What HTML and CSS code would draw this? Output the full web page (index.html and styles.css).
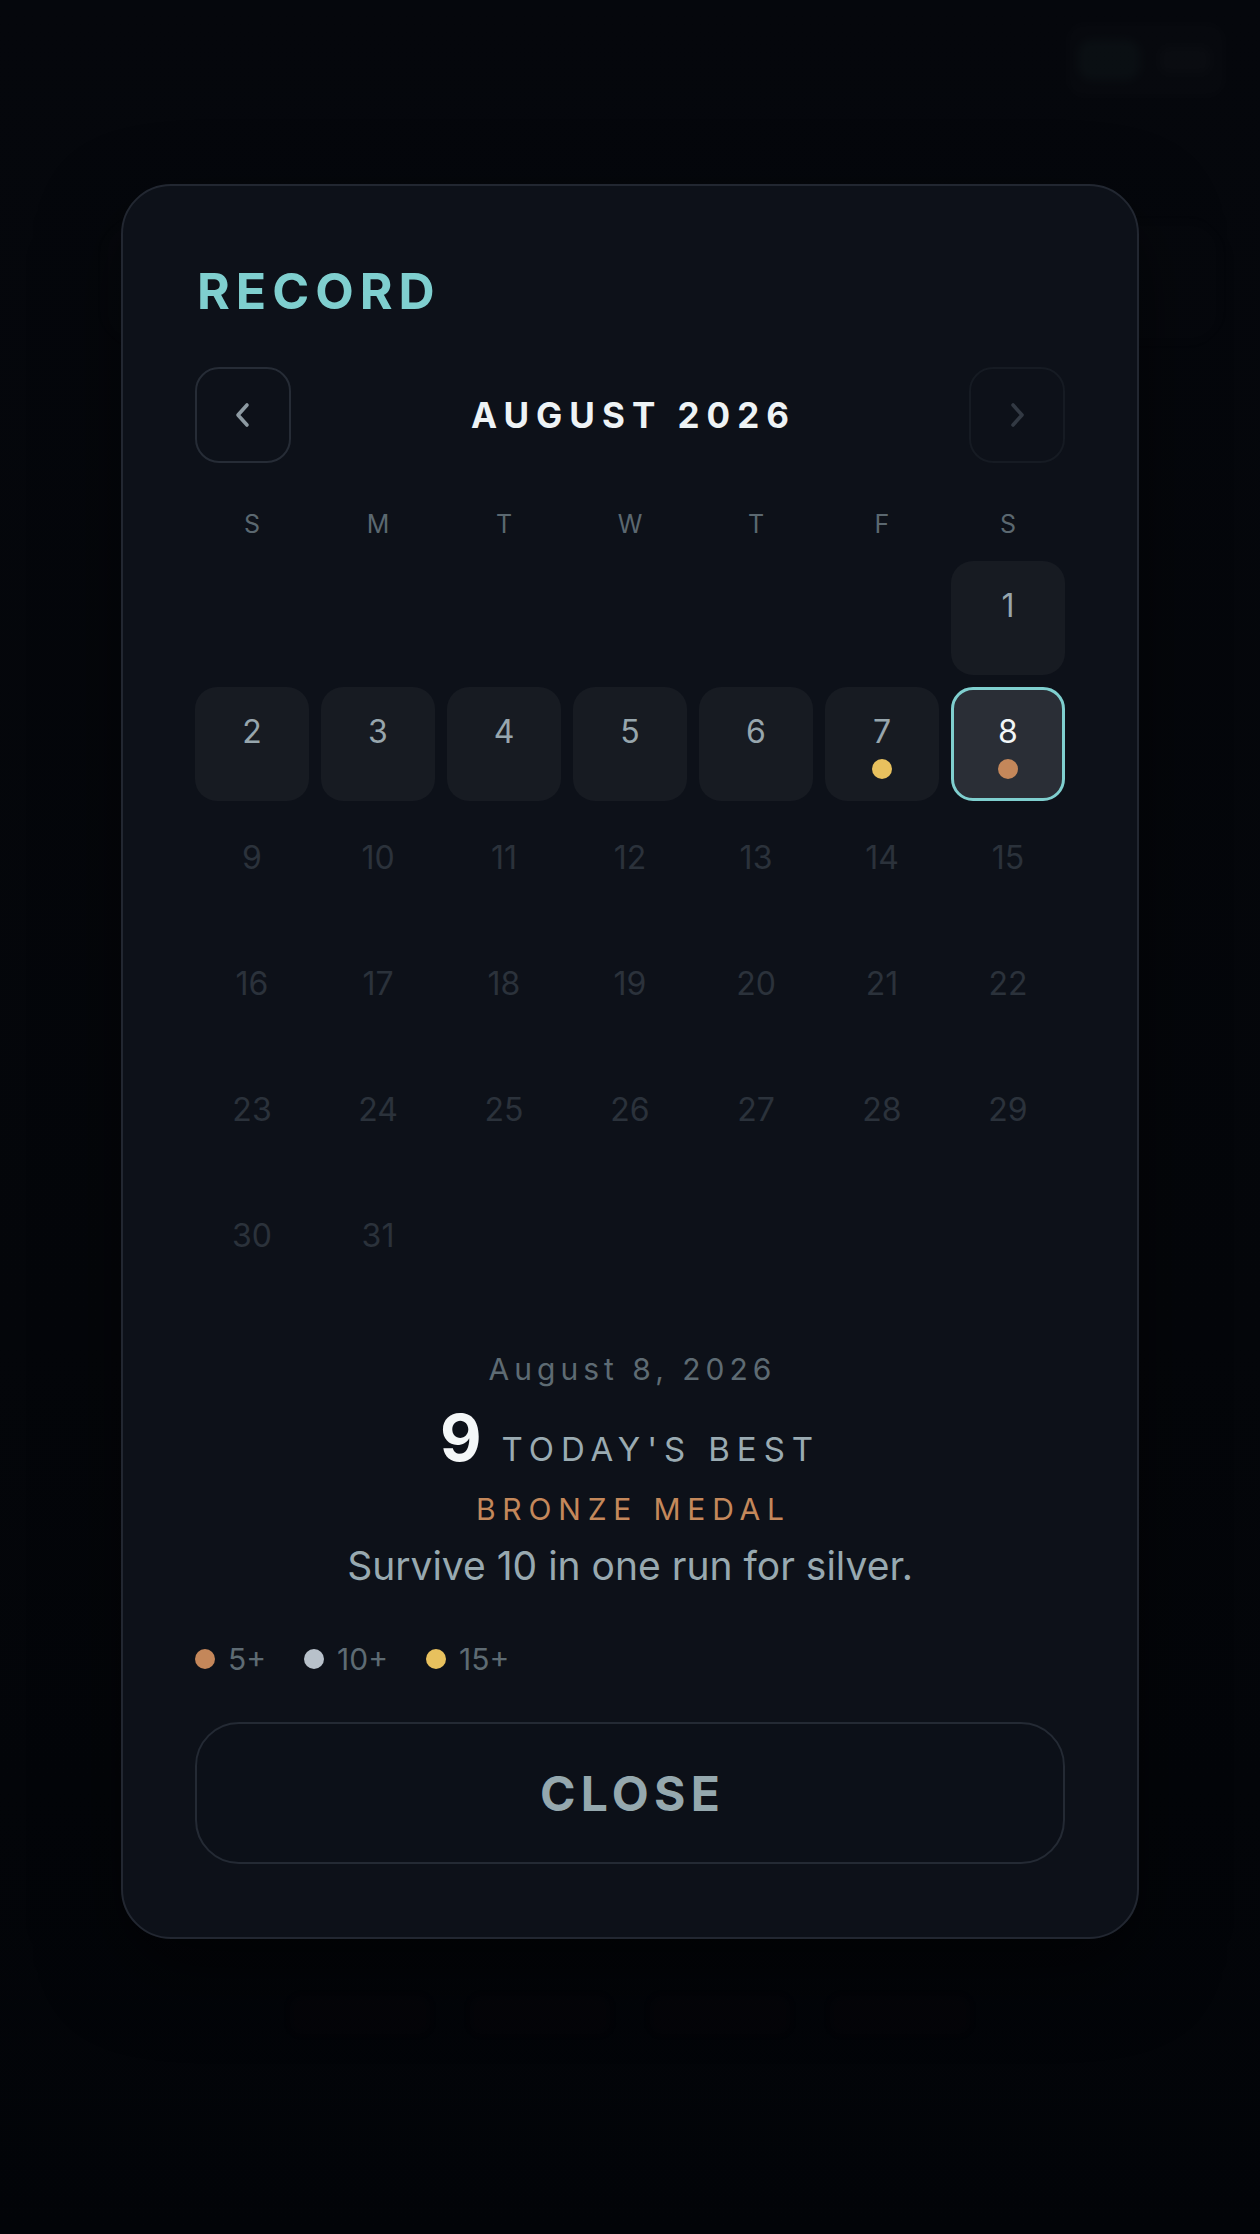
FILE: index.html
```html
<!DOCTYPE html>
<html>
  <head>
    <meta charset="utf-8">
    <title>Record</title>
    <link rel="stylesheet" href="styles.css">
  </head>
  <body>
    <!-- the game screen behind the dialog -->
    <div class="scene">
      <div class="scene-top">
        <div class="ghost-pill"><span class="ghost-dot"></span><span class="ghost-label"></span></div>
      </div>
      <div class="scene-banner"></div>
      <div class="scene-actions">
        <span class="ghost-btn"></span>
        <span class="ghost-btn"></span>
        <span class="ghost-btn"></span>
        <span class="ghost-btn"></span>
      </div>
    </div>

    <!-- record dialog -->
    <div class="overlay">
      <section class="modal">
        <h1 class="modal-title">RECORD</h1>

        <div class="month-nav">
          <button class="nav-btn" aria-label="Previous month">
            <svg width="20" height="26" viewBox="0 0 20 26"><path d="M14 3 L5 13 L14 23" fill="none" stroke="currentColor" stroke-width="3.6" stroke-linecap="round" stroke-linejoin="round"/></svg>
          </button>
          <div class="month-label">AUGUST 2026</div>
          <button class="nav-btn is-disabled" aria-label="Next month">
            <svg width="20" height="26" viewBox="0 0 20 26"><path d="M6 3 L15 13 L6 23" fill="none" stroke="currentColor" stroke-width="3.6" stroke-linecap="round" stroke-linejoin="round"/></svg>
          </button>
        </div>

        <div class="weekdays">
          <span>S</span><span>M</span><span>T</span><span>W</span><span>T</span><span>F</span><span>S</span>
        </div>

        <div class="days">
          <div class="day empty"></div>
          <div class="day empty"></div>
          <div class="day empty"></div>
          <div class="day empty"></div>
          <div class="day empty"></div>
          <div class="day empty"></div>
          <div class="day past"><span class="num">1</span><span class="dot"></span></div>

          <div class="day past"><span class="num">2</span><span class="dot"></span></div>
          <div class="day past"><span class="num">3</span><span class="dot"></span></div>
          <div class="day past"><span class="num">4</span><span class="dot"></span></div>
          <div class="day past"><span class="num">5</span><span class="dot"></span></div>
          <div class="day past"><span class="num">6</span><span class="dot"></span></div>
          <div class="day past"><span class="num">7</span><span class="dot gold"></span></div>
          <div class="day selected"><span class="num">8</span><span class="dot bronze"></span></div>

          <div class="day future"><span class="num">9</span><span class="dot"></span></div>
          <div class="day future"><span class="num">10</span><span class="dot"></span></div>
          <div class="day future"><span class="num">11</span><span class="dot"></span></div>
          <div class="day future"><span class="num">12</span><span class="dot"></span></div>
          <div class="day future"><span class="num">13</span><span class="dot"></span></div>
          <div class="day future"><span class="num">14</span><span class="dot"></span></div>
          <div class="day future"><span class="num">15</span><span class="dot"></span></div>

          <div class="day future"><span class="num">16</span><span class="dot"></span></div>
          <div class="day future"><span class="num">17</span><span class="dot"></span></div>
          <div class="day future"><span class="num">18</span><span class="dot"></span></div>
          <div class="day future"><span class="num">19</span><span class="dot"></span></div>
          <div class="day future"><span class="num">20</span><span class="dot"></span></div>
          <div class="day future"><span class="num">21</span><span class="dot"></span></div>
          <div class="day future"><span class="num">22</span><span class="dot"></span></div>

          <div class="day future"><span class="num">23</span><span class="dot"></span></div>
          <div class="day future"><span class="num">24</span><span class="dot"></span></div>
          <div class="day future"><span class="num">25</span><span class="dot"></span></div>
          <div class="day future"><span class="num">26</span><span class="dot"></span></div>
          <div class="day future"><span class="num">27</span><span class="dot"></span></div>
          <div class="day future"><span class="num">28</span><span class="dot"></span></div>
          <div class="day future"><span class="num">29</span><span class="dot"></span></div>

          <div class="day future"><span class="num">30</span><span class="dot"></span></div>
          <div class="day future"><span class="num">31</span><span class="dot"></span></div>
        </div>

        <div class="summary">
          <div class="summary-date">August 8, 2026</div>
          <div class="summary-best">
            <span class="best-value">9</span>
            <span class="best-label">TODAY'S BEST</span>
          </div>
          <div class="summary-medal">BRONZE MEDAL</div>
          <div class="summary-hint">Survive 10 in one run for silver.</div>
        </div>

        <div class="legend">
          <span class="legend-item"><span class="dot bronze"></span>5+</span>
          <span class="legend-item"><span class="dot silver"></span>10+</span>
          <span class="legend-item"><span class="dot gold"></span>15+</span>
        </div>

        <button class="close-btn">CLOSE</button>
      </section>
    </div>
  </body>
</html>
```

FILE: styles.css
```css
html,
body {
  margin: 0;
  height: 2234px;
}

body {
  position: relative;
  background: linear-gradient(180deg, #05070c 0%, #04060a 60%, #020408 100%);
  font-family: Inter, "Noto Sans", sans-serif;
  overflow: hidden;
}

/* faded game screen behind the dialog */
.scene {
  display: flex;
  flex-direction: column;
  height: 100%;
  filter: blur(4px);
}

.scene-top {
  display: flex;
  justify-content: flex-end;
  padding: 22px 34px 0 0;
}

.ghost-pill {
  display: flex;
  align-items: center;
  gap: 20px;
  width: 160px;
  height: 76px;
  padding: 0 12px;
  box-sizing: border-box;
  border-radius: 18px;
  background: rgba(255, 255, 255, 0.01);
}

.ghost-dot {
  width: 62px;
  height: 40px;
  border-radius: 14px;
  background: rgba(110, 190, 170, 0.035);
}

.ghost-label {
  width: 50px;
  height: 26px;
  border-radius: 8px;
  background: rgba(255, 255, 255, 0.015);
}

.scene-banner {
  height: 120px;
  margin: 124px 40px 0 104px;
  border-radius: 30px;
  background: rgba(150, 170, 200, 0.012);
  filter: blur(6px);
}

.scene-actions {
  display: flex;
  justify-content: center;
  gap: 40px;
  margin-top: auto;
  margin-bottom: 200px;
}

.ghost-btn {
  width: 140px;
  height: 38px;
  border-radius: 10px;
  background: rgba(90, 40, 40, 0.03);
}

/* dialog */
.overlay {
  position: absolute;
  inset: 0;
  display: flex;
  justify-content: center;
  align-items: flex-start;
  padding-top: 184px;
}

.modal {
  width: 1018px;
  box-sizing: border-box;
  padding: 74px 72px 73px;
  background: rgba(14, 18, 26, 0.96);
  border: 2px solid #222731;
  border-radius: 50px;
  box-shadow: 0 30px 80px rgba(0, 0, 0, 0.5);
}

.modal-title {
  margin: 0;
  font-size: 50px;
  line-height: 62px;
  font-weight: 700;
  letter-spacing: 0.12em;
  color: #7fcfcf;
  padding-left: 2px;
}

.month-nav {
  display: grid;
  grid-template-columns: 96px 1fr 96px;
  align-items: center;
  margin-top: 45px;
}

.nav-btn {
  width: 96px;
  height: 96px;
  display: flex;
  align-items: center;
  justify-content: center;
  padding: 0;
  background: transparent;
  border: 2px solid #262c36;
  border-radius: 24px;
  color: #8d9aa2;
  cursor: pointer;
}

.nav-btn.is-disabled {
  border-color: #161b23;
  color: #323943;
}

.month-label {
  text-align: center;
  font-size: 35px;
  line-height: 44px;
  font-weight: 700;
  letter-spacing: 0.2em;
  text-indent: 0.2em;
  color: #eef3f5;
}

.weekdays {
  display: grid;
  grid-template-columns: repeat(7, 114px);
  column-gap: 12px;
  margin-top: 46px;
  font-size: 25px;
  line-height: 30px;
  color: #5b6870;
  text-align: center;
}

.days {
  display: grid;
  grid-template-columns: repeat(7, 114px);
  grid-auto-rows: 114px;
  gap: 12px;
  margin-top: 22px;
}

.day {
  display: flex;
  flex-direction: column;
  align-items: center;
  box-sizing: border-box;
  padding-top: 25px;
  border-radius: 22px;
}

.day .num {
  font-size: 32px;
  line-height: 40px;
}

.day .dot {
  margin-top: 7px;
}

.day.past {
  background: #171b22;
  color: #97a6ad;
}

.day.selected {
  background: #2a2e36;
  border: 3px solid #7fcfcf;
  padding-top: 22px;
  color: #f2f6f7;
}

.day.future {
  color: #2b323b;
}

.dot {
  display: inline-block;
  width: 20px;
  height: 20px;
  border-radius: 50%;
}

.dot.bronze {
  background: #c4875a;
}

.dot.silver {
  background: #b8c1ca;
}

.dot.gold {
  background: #e8c15e;
}

.summary {
  display: flex;
  flex-direction: column;
  align-items: center;
  margin-top: 44px;
  text-align: center;
}

.summary-date {
  font-size: 30px;
  line-height: 40px;
  letter-spacing: 0.167em;
  text-indent: 0.167em;
  color: #5e6b73;
}

.summary-best {
  display: flex;
  align-items: baseline;
  gap: 20px;
  margin-top: 17px;
}

.best-value {
  font-size: 64px;
  line-height: 64px;
  font-weight: 700;
  color: #f4f7f8;
}

.best-label {
  font-size: 33px;
  line-height: 40px;
  letter-spacing: 0.21em;
  color: #9aabb2;
}

.summary-medal {
  margin-top: 19px;
  font-size: 30px;
  line-height: 40px;
  letter-spacing: 0.227em;
  text-indent: 0.227em;
  color: #c4885b;
}

.summary-hint {
  margin-top: 14px;
  font-size: 39px;
  line-height: 46px;
  color: #98a9b0;
}

.legend {
  display: flex;
  align-items: center;
  gap: 38px;
  margin-top: 55px;
  font-size: 30px;
  line-height: 30px;
  color: #5e6b73;
}

.legend-item {
  display: flex;
  align-items: center;
  gap: 13px;
}

.close-btn {
  display: block;
  width: 100%;
  height: 142px;
  margin-top: 48px;
  background: #0c1018;
  border: 2px solid #242a34;
  border-radius: 44px;
  font-family: Inter, "Noto Sans", sans-serif;
  font-size: 48px;
  font-weight: 700;
  letter-spacing: 0.11em;
  text-indent: 0.11em;
  color: #95a8ae;
  cursor: pointer;
}
```
